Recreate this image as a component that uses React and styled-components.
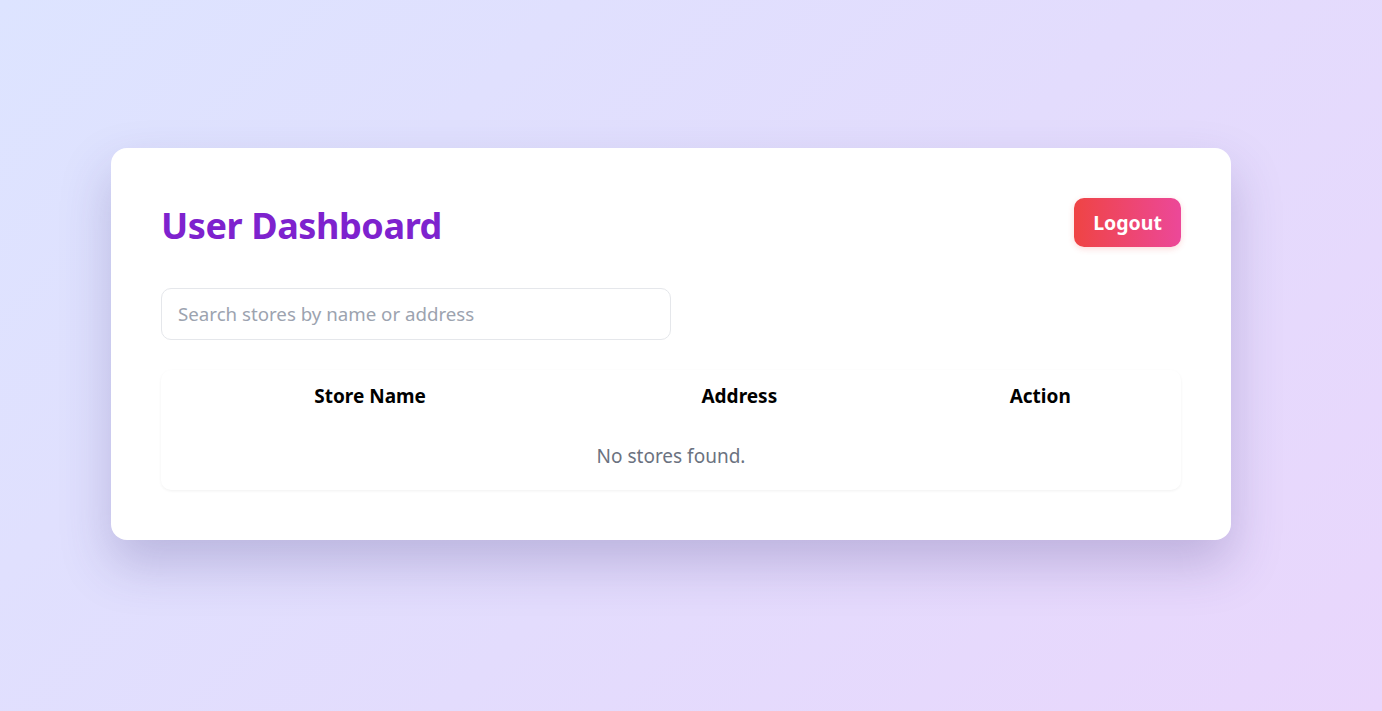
import React, { useState } from "react";
import styled, { createGlobalStyle } from "styled-components";

const GlobalStyle = createGlobalStyle`
  * { box-sizing: border-box; }
  html, body { margin: 0; padding: 0; }
  body {
    font-family: "Noto Sans", "Open Sans", sans-serif;
    min-height: 100vh;
    background: linear-gradient(135deg, #dde4ff 0%, #e3dcfd 55%, #e9d6fc 100%);
  }
`;

const stores = [];

const UserDashboard = () => {
  const [query, setQuery] = useState("");

  const filtered = stores.filter(
    (s) =>
      s.name.toLowerCase().includes(query.toLowerCase()) ||
      s.address.toLowerCase().includes(query.toLowerCase())
  );

  return (
    <Page>
      <GlobalStyle />
      <Card>
        <Header>
          <Title>User Dashboard</Title>
          <LogoutButton>Logout</LogoutButton>
        </Header>

        <SearchInput
          type="text"
          placeholder="Search stores by name or address"
          value={query}
          onChange={(e) => setQuery(e.target.value)}
        />

        <TableWrap>
          <Table>
            <colgroup>
              <col style={{ width: "41%" }} />
              <col style={{ width: "31.4%" }} />
              <col style={{ width: "27.6%" }} />
            </colgroup>
            <thead>
              <tr>
                <Th>Store Name</Th>
                <Th>Address</Th>
                <Th>Action</Th>
              </tr>
            </thead>
            <tbody>
              {filtered.length === 0 ? (
                <tr>
                  <EmptyCell colSpan={3}>No stores found.</EmptyCell>
                </tr>
              ) : (
                filtered.map((s) => (
                  <tr key={s.id}>
                    <Td>{s.name}</Td>
                    <Td>{s.address}</Td>
                    <Td>Rate</Td>
                  </tr>
                ))
              )}
            </tbody>
          </Table>
        </TableWrap>
      </Card>
    </Page>
  );
};

const Page = styled.div`
  min-height: 100vh;
  display: flex;
  justify-content: center;
  align-items: center;
  padding: 0 40px 24px 0;
`;

const Card = styled.div`
  width: 1120px;
  background: #ffffff;
  border-radius: 16px;
  padding: 50px;
  box-shadow: 0 24px 50px rgba(70, 60, 130, 0.25);
`;

const Header = styled.div`
  display: flex;
  justify-content: space-between;
  align-items: center;
  height: 50px;
  margin-bottom: 40px;
`;

const Title = styled.h1`
  margin: 6px 0 0;
  font-size: 36px;
  font-weight: 700;
  color: #7e22ce;
  letter-spacing: -0.4px;
`;

const LogoutButton = styled.button`
  width: 107px;
  height: 49px;
  border: none;
  border-radius: 10px;
  background: linear-gradient(90deg, #ef4444, #ec4899);
  color: #ffffff;
  font-family: inherit;
  font-size: 19.5px;
  font-weight: 700;
  cursor: pointer;
  box-shadow: 0 2px 6px rgba(239, 68, 68, 0.2);
`;

const SearchInput = styled.input`
  display: block;
  width: 510px;
  height: 52px;
  padding: 0 16px;
  border: 1px solid #e5e7eb;
  border-radius: 10px;
  font-family: inherit;
  font-size: 18.7px;
  color: #111827;
  outline: none;
  margin-bottom: 30px;

  &::placeholder {
    color: #9ca3af;
  }
`;

const TableWrap = styled.div`
  border-radius: 10px;
  overflow: hidden;
  box-shadow: 0 1px 3px rgba(0, 0, 0, 0.06);
`;

const Table = styled.table`
  width: 100%;
  border-collapse: collapse;
  table-layout: fixed;
`;

const Th = styled.th`
  height: 52px;
  padding: 0 20px;
  text-align: center;
  font-size: 19px;
  font-weight: 700;
  color: #000000;
`;

const Td = styled.td`
  padding: 16px 20px;
  text-align: center;
  font-size: 19px;
`;

const EmptyCell = styled.td`
  height: 68px;
  text-align: center;
  font-size: 19px;
  color: #6b7280;
`;

export default UserDashboard;
